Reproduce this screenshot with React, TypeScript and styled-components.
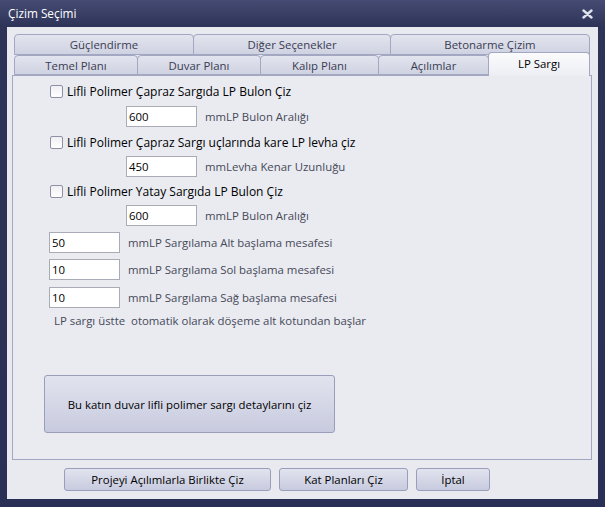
import React from "react";
import styled, { createGlobalStyle } from "styled-components";

const Global = createGlobalStyle`
  html, body { margin: 0; padding: 0; }
  body { width: 605px; height: 507px; overflow: hidden; background: #2a2f55; }
  * { box-sizing: border-box; }
`;

const FONT = `"Open Sans", "Noto Sans", "Liberation Sans", sans-serif`;

const Window = styled.div`
  width: 605px;
  height: 507px;
  display: flex;
  flex-direction: column;
  background: linear-gradient(#454b72 0px, #2e3358 27px, #2a2f55 100%);
  padding: 0 7px 8px 7px;
  font-family: ${FONT};
  font-size: 11.4px;
`;

const TitleBar = styled.div`
  height: 27px;
  display: flex;
  align-items: center;
  justify-content: space-between;
  padding: 0 5px 2px 1px;
  color: #ffffff;
  font-size: 11.8px;
`;

const CloseGlyph = styled.svg`
  width: 11px;
  height: 10px;
  margin-top: 2px;
`;

const Client = styled.div`
  flex: 1;
  background: #e8eaf0;
  display: flex;
  flex-direction: column;
  padding: 7px 6px 0 5px;
`;

const TabRow = styled.div<{ $h: number }>`
  display: flex;
  height: ${(p) => p.$h}px;
  margin: 0 2px;
  align-items: flex-end;
  position: relative;
  z-index: 1;
`;

const Tab = styled.div<{ $w: number; $active?: boolean }>`
  width: ${(p) => p.$w}px;
  height: ${(p) => (p.$active ? "24px" : "100%")};
  margin-bottom: ${(p) => (p.$active ? "-1px" : "0")};
  margin-right: -1px;
  border: 1px solid #a3a7c1;
  border-bottom: ${(p) => (p.$active ? "none" : "1px solid #a3a7c1")};
  border-radius: 4px 4px 0 0;
  background: ${(p) =>
    p.$active
      ? "linear-gradient(#fbfbfd, #eceef3)"
      : "linear-gradient(#e2e4ee, #cfd2e1)"};
  color: ${(p) => (p.$active ? "#000" : "#3a3c52")};
  display: flex;
  justify-content: center;
  align-items: ${(p) => (p.$active ? "flex-start" : "center")};
  padding-top: ${(p) => (p.$active ? "3px" : "0")};
  white-space: nowrap;
`;

const Panel = styled.div`
  height: 385px;
  border: 1px solid #a3a7c1;
  background: #e9ebf1;
  display: flex;
  flex-direction: column;
`;

const CheckRow = styled.label<{ $mt: number }>`
  display: flex;
  align-items: center;
  gap: 4px;
  height: 18px;
  margin-top: ${(p) => p.$mt}px;
  margin-left: 37px;
  color: #000;
  font-size: 12px;
  white-space: nowrap;
`;

const Box = styled.span`
  width: 13px;
  height: 13px;
  border: 1px solid #8e91a6;
  border-radius: 2px;
  background: linear-gradient(#f0f0f3, #ffffff);
`;

const ValueRow = styled.div<{ $mt: number; $indent: number }>`
  display: flex;
  align-items: center;
  gap: 8px;
  margin-top: ${(p) => p.$mt}px;
  margin-left: ${(p) => p.$indent}px;
  height: 21px;
`;

const Input = styled.div`
  width: 71px;
  height: 21px;
  border: 1px solid #a9abb6;
  background: #fff;
  display: flex;
  align-items: center;
  padding-left: 2px;
  color: #000;
`;

const Unit = styled.span`
  color: #474958;
  white-space: nowrap;
`;

const Note = styled.div`
  margin-top: 5px;
  margin-left: 41px;
  height: 16px;
  line-height: 16px;
  color: #474958;
  white-space: pre;
`;

const Button = styled.button<{ $w: number; $h: number }>`
  width: ${(p) => p.$w}px;
  height: ${(p) => p.$h}px;
  border: 1px solid #9a9eba;
  border-radius: 3px;
  background: linear-gradient(#e1e3ee, #c8cbdf);
  font-family: ${FONT};
  font-size: 11.4px;
  color: #000;
  padding: 0;
  white-space: nowrap;
`;

const BigButtonWrap = styled.div`
  margin-top: 46px;
  margin-left: 31px;
`;

const Footer = styled.div`
  display: flex;
  gap: 8px;
  margin-top: 8px;
  padding-left: 52px;
`;

const topTabs = [
  { label: "Güçlendirme", w: 180 },
  { label: "Diğer Seçenekler", w: 198 },
  { label: "Betonarme Çizim", w: 200 },
];
const bottomTabs = [
  { label: "Temel Planı", w: 124 },
  { label: "Duvar Planı", w: 124 },
  { label: "Kalıp Planı", w: 119 },
  { label: "Açılımlar", w: 111 },
  { label: "LP Sargı", w: 102, active: true },
];

export default function App() {
  return (
    <>
      <Global />
      <Window>
        <TitleBar>
          <span>Çizim Seçimi</span>
          <CloseGlyph viewBox="0 0 11 10">
            <path d="M1.5 1.5 L9.5 8.5 M9.5 1.5 L1.5 8.5" stroke="#dfe2ec" strokeWidth="2.4" strokeLinecap="round" />
          </CloseGlyph>
        </TitleBar>
        <Client>
          <TabRow $h={21}>
            {topTabs.map((t) => (
              <Tab key={t.label} $w={t.w}>{t.label}</Tab>
            ))}
          </TabRow>
          <TabRow $h={20}>
            {bottomTabs.map((t) => (
              <Tab key={t.label} $w={t.w} $active={t.active}>{t.label}</Tab>
            ))}
          </TabRow>
          <Panel>
            <CheckRow $mt={6}><Box />Lifli Polimer Çapraz Sargıda LP Bulon Çiz</CheckRow>
            <ValueRow $mt={6} $indent={113}><Input>600</Input><Unit>mmLP Bulon Aralığı</Unit></ValueRow>
            <CheckRow $mt={6}><Box />Lifli Polimer Çapraz Sargı uçlarında kare LP levha çiz</CheckRow>
            <ValueRow $mt={5} $indent={113}><Input>450</Input><Unit>mmLevha Kenar Uzunluğu</Unit></ValueRow>
            <CheckRow $mt={5}><Box />Lifli Polimer Yatay Sargıda LP Bulon Çiz</CheckRow>
            <ValueRow $mt={5} $indent={113}><Input>600</Input><Unit>mmLP Bulon Aralığı</Unit></ValueRow>
            <ValueRow $mt={6} $indent={36}><Input>50</Input><Unit>mmLP Sargılama Alt başlama mesafesi</Unit></ValueRow>
            <ValueRow $mt={6} $indent={36}><Input>10</Input><Unit>mmLP Sargılama Sol başlama mesafesi</Unit></ValueRow>
            <ValueRow $mt={7} $indent={36}><Input>10</Input><Unit>mmLP Sargılama Sağ başlama mesafesi</Unit></ValueRow>
            <Note>{"LP sargı üstte  otomatik olarak döşeme alt kotundan başlar"}</Note>
            <BigButtonWrap>
              <Button $w={291} $h={58}>Bu katın duvar lifli polimer sargı detaylarını çiz</Button>
            </BigButtonWrap>
          </Panel>
          <Footer>
            <Button $w={207} $h={23}>Projeyi Açılımlarla Birlikte Çiz</Button>
            <Button $w={129} $h={23}>Kat Planları Çiz</Button>
            <Button $w={74} $h={23}>İptal</Button>
          </Footer>
        </Client>
      </Window>
    </>
  );
}
